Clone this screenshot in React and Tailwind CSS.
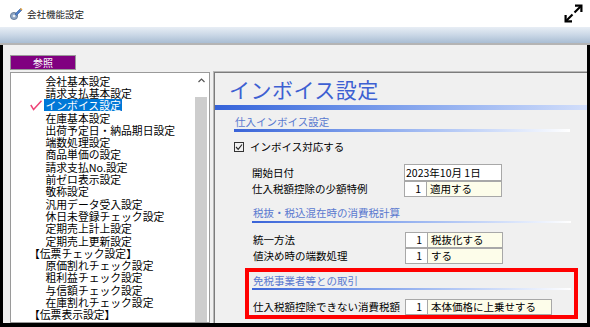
const FONT = "font-['Noto_Sans_CJK_JP','Noto_Sans',sans-serif]";

const items = [
  { t: "会社基本設定" },
  { t: "請求支払基本設定" },
  { t: "インボイス設定", sel: true },
  { t: "在庫基本設定" },
  { t: "出荷予定日・納品期日設定" },
  { t: "端数処理設定" },
  { t: "商品単価の設定" },
  { t: "請求支払No.設定" },
  { t: "前ゼロ表示設定" },
  { t: "敬称設定" },
  { t: "汎用データ受入設定" },
  { t: "休日未登録チェック設定" },
  { t: "定期売上計上設定" },
  { t: "定期売上更新設定" },
  { t: "【伝票チェック設定】", br: true },
  { t: "原価割れチェック設定" },
  { t: "粗利益チェック設定" },
  { t: "与信額チェック設定" },
  { t: "在庫割れチェック設定" },
  { t: "【伝票表示設定】", br: true },
];

function Row({ label, num, text, wide }) {
  return (
    <div className="flex h-[16px] items-stretch">
      <div className="w-[152px] flex items-center text-[10.5px] leading-[12px] text-black whitespace-nowrap">
        {label}
      </div>
      <div className="w-[23px] border border-[#a8a8a8] bg-white flex items-center justify-end pr-[5px] text-[10.5px] leading-[12px] text-black">
        {num}
      </div>
      <div
        className={
          (wide ? "w-[125px]" : "w-[76px]") +
          " -ml-px border border-[#a8a8a8] bg-[#fdfdea] flex items-center pl-[3px] text-[10.5px] leading-[12px] text-black whitespace-nowrap"
        }
      >
        {text}
      </div>
    </div>
  );
}

export default function App() {
  return (
    <div className={"w-[590px] h-[327px] overflow-hidden bg-white flex flex-col " + FONT}>
      {/* title bar */}
      <div className="h-[27px] flex items-center pl-[9px] pr-[7px] bg-white shrink-0">
        <svg width="14" height="14" viewBox="0 0 14 14">
          <circle cx="5" cy="9" r="3.6" fill="#8fa6c4" stroke="#5b718f" strokeWidth="0.8" />
          <circle cx="5" cy="9" r="1.3" fill="#e8eef6" />
          <path d="M6 7 L11.5 1.5 L13 3 L7.5 8.5 Z" fill="#4f7fc9" stroke="#2f5a9a" strokeWidth="0.6" />
          <path d="M11.5 1.5 L13 3" stroke="#e9a33a" strokeWidth="1.6" />
        </svg>
        <span className="ml-[4px] text-[9.5px] leading-[12px] text-[#222]">会社機能設定</span>
        <svg className="ml-auto" width="19" height="19" viewBox="0 0 19 19">
          <path d="M10.5 8.5 L17 2" stroke="#000" strokeWidth="2.2" />
          <path d="M11 1.6 H17.4 V8" stroke="#000" strokeWidth="2.2" fill="none" />
          <path d="M8.5 10.5 L2 17" stroke="#000" strokeWidth="2.2" />
          <path d="M1.6 11 V17.4 H8" stroke="#000" strokeWidth="2.2" fill="none" />
        </svg>
      </div>
      {/* gradient band */}
      <div className="h-[16px] shrink-0 bg-gradient-to-b from-[#e8eef5] via-[#cad7e6] to-[#a9bdd3]" />
      <div className="h-[2px] shrink-0 bg-[#b4b4b4]" />
      {/* main */}
      <div className="flex-1 flex border-l-[3px] border-r-[3px] border-b-[4px] border-black bg-[#f0f0f0] min-h-0">
        {/* left column */}
        <div className="w-[210px] shrink-0 pl-[7px] pr-[3px] flex flex-col">
          <div className="mt-[10px] w-[66px] h-[15px] border border-[#9a9a9a] bg-[#800080] flex items-center justify-center">
            <span className="text-[10px] leading-[11px] text-white">参照</span>
          </div>
          <div className="mt-[2px] flex-1 border border-[#9a9a9a] bg-white flex min-h-0 overflow-hidden">
            <div className="flex-1 pt-[1.5px] flex flex-col">
              {items.map((it, i) =>
                it.br ? (
                  <div key={i} className="h-[12.3px] pl-[18px] flex items-center text-[10.8px] leading-[12px] text-black whitespace-nowrap">
                    {it.t}
                  </div>
                ) : (
                  <div key={i} className="h-[12.3px] pl-[19px] flex items-center">
                    <div className="w-[14px] h-[12px] flex items-center">
                      {it.sel && (
                        <svg width="13" height="11" viewBox="0 0 13 11">
                          <path d="M0.8 5 L3.6 9.6 L11.5 0.8" stroke="#ee4477" strokeWidth="1.5" fill="none" />
                        </svg>
                      )}
                    </div>
                    <span
                      className={
                        "h-[12px] px-[1.5px] flex items-center text-[10.8px] leading-[12px] whitespace-nowrap " +
                        (it.sel ? "bg-[#0078d7] text-white" : "text-black")
                      }
                    >
                      {it.t}
                    </span>
                  </div>
                )
              )}
            </div>
            <div className="w-[12px] shrink-0 flex flex-col mr-[2px]">
              <div className="h-[24px] flex items-start justify-center pt-[5px]">
                <svg width="7" height="5" viewBox="0 0 7 5">
                  <path d="M0.5 4 L3.5 1 L6.5 4" stroke="#555" strokeWidth="1.2" fill="none" />
                </svg>
              </div>
              <div className="flex-1 bg-[#cdcdcd]" />
            </div>
          </div>
        </div>
        {/* right panel */}
        <div className="flex-1 mt-[26px] border-t border-l border-[#b8b8b8] min-w-0">
          <div className="h-full border-t border-l border-[#7c7c7c] flex flex-col">
            <div className="h-[32px] pl-[14px] flex items-center">
              <span className="text-[21px] leading-[26px] text-[#3d60d2] tracking-[0.5px]">インボイス設定</span>
            </div>
            <div className="h-[5px] bg-gradient-to-r from-[#3562d9] to-[#d2defa]" />

            {/* section 1 */}
            <div className="pl-[19px] flex flex-col">
              <div className="mt-[7px] ml-[1px] text-[10.5px] leading-[10px] text-[#5a79cf]">仕入インボイス設定</div>
              <div className="mt-[2px] w-[336px] h-[3px] bg-gradient-to-r from-[#3a63d8] to-white" />
              <div className="mt-[9px] h-[12px] flex items-center">
                <div className="w-[10px] h-[10px] border border-[#333] bg-[#f0f0f0] flex items-center justify-center">
                  <svg width="8" height="8" viewBox="0 0 8 8">
                    <path d="M1 4 L3.2 6.3 L7 1.5" stroke="#222" strokeWidth="1.1" fill="none" />
                  </svg>
                </div>
                <span className="ml-[6px] text-[10.5px] leading-[12px] text-black">インボイス対応する</span>
              </div>
              <div className="mt-[11px] ml-[18px] flex flex-col">
                <div className="flex h-[17px]">
                  <div className="w-[152px] flex items-center text-[10.5px] leading-[12px] text-black">開始日付</div>
                  <div className="w-[98px] border border-[#a8a8a8] bg-white flex items-center pl-[1px] text-[10.5px] leading-[12px] text-black whitespace-nowrap">
                    2023年10月 1日
                  </div>
                </div>
                <Row label="仕入税額控除の少額特例" num="1" text="適用する" />
              </div>
            </div>

            {/* section 2 */}
            <div className="pl-[37px] flex flex-col">
              <div className="mt-[11px] ml-[1px] text-[10.5px] leading-[10px] text-[#5a79cf]">税抜・税込混在時の消費税計算</div>
              <div className="mt-[3px] w-[319px] h-[2px] bg-gradient-to-r from-[#3a63d8] to-white" />
              <div className="mt-[9px] ml-[1px] flex flex-col">
                <Row label="統一方法" num="1" text="税抜化する" />
                <Row label="値決め時の端数処理" num="1" text="する" />
              </div>
            </div>

            {/* section 3 (red frame) */}
            <div className="mt-[4px] ml-[30px] w-[333px] border-[4px] border-[#ff0000] pl-[3px] pb-0 flex flex-col">
              <div className="mt-[4px] ml-[1px] text-[10.5px] leading-[10px] text-[#5a79cf]">免税事業者等との取引</div>
              <div className="mt-[2px] w-[319px] h-[2px] bg-gradient-to-r from-[#3a63d8] to-white" />
              <div className="mt-[9px] ml-[1px]">
                <Row label="仕入税額控除できない消費税額" num="1" text="本体価格に上乗せする" wide />
              </div>
            </div>
          </div>
        </div>
      </div>
    </div>
  );
}
